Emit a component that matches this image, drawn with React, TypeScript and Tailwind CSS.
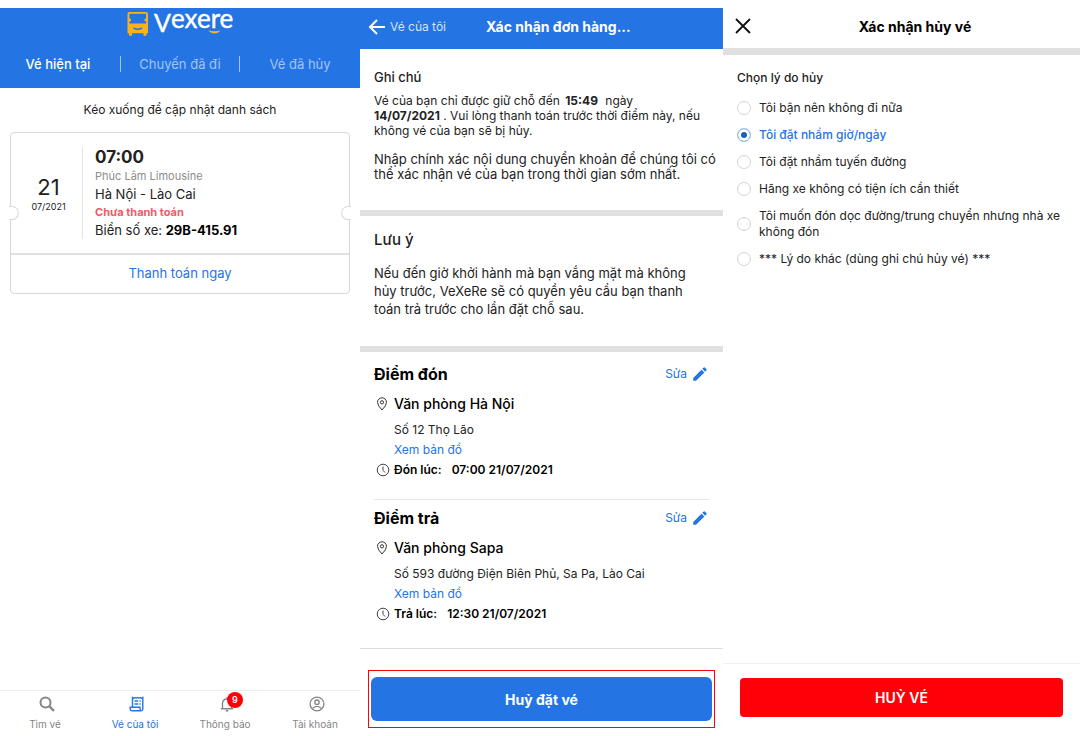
import React, { useState } from 'react';
import { MdEdit } from 'react-icons/md';

const reasons = [
  'Tôi bận nên không đi nữa',
  'Tôi đặt nhầm giờ/ngày',
  'Tôi đặt nhầm tuyến đường',
  'Hãng xe không có tiện ích cần thiết',
  'Tôi muốn đón dọc đường/trung chuyển nhưng nhà xe không đón',
  '*** Lý do khác (dùng ghi chú hủy vé) ***',
];

const Logo: React.FC = () => (
  <svg width="106" height="28" viewBox="0 0 106 28" className="overflow-visible" role="img" aria-label="Vexere">
    {/* Bus */}
    <path
      fill="#f9b21d"
      fillRule="evenodd"
      d="M2.5 2H19Q21 2 21 4V23.2H19.5V25.8H16.500V23.2H5V25.8H2V23.2H0.500V4Q0.500 2 2.500 2ZM2.400 3.800V8.200L4 9.200V10.800L2.400 11.800V13.600H19.100V11.800L17.500 10.800V9.200L19.100 8.200V3.800Z"
    />
    <path d="M6.5 17.8q4.300 2.800 8.600 0" fill="none" stroke="#2474e4" strokeWidth="1.6" />
    {/* Wordmark */}
    <text fill="#fff" fontFamily="Lato, sans-serif" fontSize="26" x="44" y="18" stroke="#fff" strokeWidth="0.4">exere</text>
    <text fill="#fff" fontFamily="Lato, sans-serif" fontSize="25" x="27" y="22" stroke="#fff" strokeWidth="0.4">V</text>
    <path d="M81 20.500q6.500 1.500 13 0q-6.500 6 -13 0z" fill="#f9b21d" />
  </svg>
);

const SearchIcon: React.FC = () => (
  <svg width="16" height="16" viewBox="0 0 16 16" fill="none" stroke="currentColor" strokeWidth="2">
    <circle cx="6.5" cy="6.5" r="5" />
    <path d="M10.2 10.2L15 15" strokeWidth="2.4" />
  </svg>
);

const TicketIcon: React.FC = () => (
  <svg width="16" height="16" viewBox="0 0 16 16" fill="none" stroke="currentColor" strokeWidth="1.4">
    <path d="M3.5 11V1.500l1.200.8 1.300-.8 1.300.8 1.300-.8 1.300.8 1.300-.8 1.300.8 1.300-.8V13q0 1.700-1.700 1.700" />
    <path d="M11 11.300H1.200V13q0 1.700 1.600 1.700h9.400Q11 14.300 11 13z" />
    <path d="M5.500 5h3.800M5.500 8h3.800M10.500 5h1.200M10.500 8h1.200" />
  </svg>
);

const BellIcon: React.FC = () => (
  <svg width="16" height="16" viewBox="0 0 16 16" fill="none" stroke="currentColor" strokeWidth="1.4">
    <path d="M1.800 12.700h12.400M3.500 12.500V7.500Q3.500 3 8 3t4.500 4.500v5M8 3V1.200" />
    <path d="M6.700 14.700h2.600" strokeWidth="1.6" />
  </svg>
);

const UserIcon: React.FC = () => (
  <svg width="16" height="16" viewBox="0 0 16 16" fill="none" stroke="currentColor" strokeWidth="1.3">
    <circle cx="8" cy="8" r="6.9" />
    <circle cx="8" cy="6.2" r="2.2" />
    <path d="M3.500 12.700Q5 10.400 8 10.400t4.500 2.300" />
  </svg>
);

const PinIcon: React.FC = () => (
  <svg width="12" height="14" viewBox="0 0 12 14" fill="none" stroke="#333" strokeWidth="1">
    <path d="M6 13Q1.500 8.500 1.500 5.300a4.500 4.500 0 0 1 9 0Q10.500 8.500 6 13z" />
    <circle cx="6" cy="5.3" r="1.6" />
  </svg>
);

const ClockIcon: React.FC = () => (
  <svg width="14" height="14" viewBox="0 0 14 14" fill="none" stroke="#444" strokeWidth="1">
    <circle cx="7" cy="7" r="5.8" />
    <path d="M7 3.500V7.300L9 9.500" />
  </svg>
);

const navItems = [
  { label: 'Tìm vé', icon: SearchIcon, active: false, badge: null },
  { label: 'Vé của tôi', icon: TicketIcon, active: true, badge: null },
  { label: 'Thông báo', icon: BellIcon, active: false, badge: '9' },
  { label: 'Tài khoản', icon: UserIcon, active: false, badge: null },
];

const TicketsScreen: React.FC = () => (
  <section className="flex min-w-0 flex-col">
    <header className="flex h-20 flex-col items-center bg-[#2474e4] pt-0.5">
      <Logo />
      <nav className="mt-3 grid w-full grid-cols-3 text-[13px] leading-7">
        <button className="pr-1 font-medium text-white">Vé hiện tại</button>
        <button className="relative text-[#a3c4f2] before:absolute before:inset-y-1.5 before:left-0 before:w-px before:bg-[#a3c4f2] after:absolute after:inset-y-1.5 after:right-0 after:w-px after:bg-[#a3c4f2]">
          Chuyến đã đi
        </button>
        <button className="text-[#a3c4f2]">Vé đã hủy</button>
      </nav>
    </header>

    <p className="mt-3 text-center text-[12px] leading-5 text-[#222]">Kéo xuống để cập nhật danh sách</p>

    <article className="relative mx-2.5 mt-3 rounded border border-[#d9d9d9]">
      <div className="flex py-3.5">
        <div className="flex w-[72px] flex-col items-center justify-center border-r border-[#e5e5e5] pt-1 pl-1 text-[#222]">
          <span className="text-[22px] leading-6">21</span>
          <span className="text-[9px] leading-4">07/2021</span>
        </div>
        <div className="pl-3 text-[13px] leading-[18px] text-[#222]">
          <h2 className="text-[17px] leading-5 font-bold">07:00</h2>
          <p className="text-[11px] text-[#8c8c8c]">Phúc Lâm Limousine</p>
          <p>Hà Nội - Lào Cai</p>
          <p className="text-[11px] font-bold text-[#ee5a68]">Chưa thanh toán</p>
          <p>
            Biển số xe: <b className="text-black">29B-415.91</b>
          </p>
        </div>
      </div>
      <button className="h-10 w-full border-t-2 border-[#e0e0e0] text-[13px] text-[#2474e4]">Thanh toán ngay</button>
      <span className="absolute top-[73px] -left-0.5 h-3.5 w-2.5 rounded-r-full border border-l-0 border-[#d9d9d9] bg-white" />
      <span className="absolute top-[73px] -right-0.5 h-3.5 w-2.5 rounded-l-full border border-r-0 border-[#d9d9d9] bg-white" />
    </article>

    <nav className="mt-auto grid h-[46px] grid-cols-4 border-t border-[#ececec]">
      {navItems.map(({ label, icon: Icon, active, badge }) => (
        <button
          key={label}
          className={`flex flex-col items-center pt-[5px] text-[10px] leading-4 ${active ? 'text-[#2474e4]' : 'text-[#858585]'}`}
        >
          <span className="relative pl-1">
            <Icon />
            {badge && (
              <span className="absolute -top-1 left-3 flex size-4 items-center justify-center rounded-full bg-[#ff0008] text-[9px] font-semibold text-white">
                {badge}
              </span>
            )}
          </span>
          <span className="mt-1">{label}</span>
        </button>
      ))}
    </nav>
  </section>
);

type StopProps = { title: string; place: string; address: string; label: string; time: string };

const Stop: React.FC<StopProps> = ({ title, place, address, label, time }) => (
  <div>
    <div className="flex items-center justify-between">
      <h2 className="text-[16px] leading-6 font-bold text-black">{title}</h2>
      <button className="flex items-center gap-1 text-[12px] text-[#2474e4]">
        Sửa <MdEdit className="size-[18px]" />
      </button>
    </div>
    <div className="mt-1.5 grid grid-cols-[20px_1fr] items-center">
      <span className="pl-0.5"><PinIcon /></span>
      <h3 className="text-[14px] leading-6 font-medium text-black">{place}</h3>
    </div>
    <div className="mt-1 flex flex-col items-start pl-5 text-[12px] leading-5">
      <p>{address}</p>
      <a href="#" className="text-[#2474e4]">Xem bản đồ</a>
    </div>
    <div className="grid grid-cols-[20px_1fr] items-center text-[12px] leading-5 font-semibold text-black">
      <span className="pl-0.5"><ClockIcon /></span>
      <p>
        <span className="mr-2.5">{label}</span>
        {time}
      </p>
    </div>
  </div>
);

const OrderScreen: React.FC = () => (
  <section className="flex min-w-0 flex-col text-[#222]">
    <header className="grid h-[41px] grid-cols-[118px_1fr] items-center bg-[#2474e4] pb-1 pl-2 text-white">
      <button className="flex items-center gap-1 text-[12px] text-[#d3e3fa]">
        <svg width="18" height="16" viewBox="0 0 18 16" fill="none" stroke="#fff" strokeWidth="2">
          <path d="M17 8H2M9 1L2 8l7 7" />
        </svg>
        Vé của tôi
      </button>
      <h1 className="text-[14px] font-bold">Xác nhận đơn hàng...</h1>
    </header>

    <div className="pt-4 pb-7 pl-3.5 text-[12px] leading-[15px]">
      <h2 className="mb-1 text-[13px] leading-6 font-medium">Ghi chú</h2>
      <p>
        Vé của bạn chỉ được giữ chỗ đến <b className="mr-1 ml-0.5">15:49</b> ngày
        <br />
        <b>14/07/2021</b> . Vui lòng thanh toán trước thời điểm này, nếu
        <br />
        không vé của bạn sẽ bị hủy.
      </p>
      <p className="mt-3.5 text-[13px]">
        Nhập chính xác nội dung chuyển khoản để chúng tôi có
        <br />
        thể xác nhận vé của bạn trong thời gian sớm nhất.
      </p>
    </div>

    <div className="border-y-[6px] border-[#e0e0e0] pt-3 pb-7 pl-3.5 text-[13px] leading-[18px]">
      <h2 className="mb-3 text-[15px] leading-6 font-medium">Lưu ý</h2>
      <p>
        Nếu đến giờ khởi hành mà bạn vắng mặt mà không
        <br />
        hủy trước, VeXeRe sẽ có quyền yêu cầu bạn thanh
        <br />
        toán trả trước cho lần đặt chỗ sau.
      </p>
    </div>

    <div className="px-3.5 pt-2.5">
      <Stop
        title="Điểm đón"
        place="Văn phòng Hà Nội"
        address="Số 12 Thọ Lão"
        label="Đón lúc:"
        time="07:00 21/07/2021"
      />
      <hr className="mt-[19px] mb-1.5 border-[#e8e8e8]" />
      <Stop
        title="Điểm trả"
        place="Văn phòng Sapa"
        address="Số 593 đường Điện Biên Phủ, Sa Pa, Lào Cai"
        label="Trả lúc:"
        time="12:30 21/07/2021"
      />
    </div>

    <footer className="mt-auto border-t border-[#dcdcdc] px-2 pt-[21px] pb-2">
      <div className="border border-[#ff0010] px-0.5 py-1.5">
        <button className="h-11 w-full rounded-md bg-[#2474e4] text-[14px] font-bold text-white">Huỷ đặt vé</button>
      </div>
    </footer>
  </section>
);

const CancelScreen: React.FC = () => {
  const [selected, setSelected] = useState(1);

  return (
    <section className="flex min-w-0 flex-col text-[#222]">
      <header className="grid h-[47px] grid-cols-[40px_1fr_13px] items-center border-b-[7px] border-[#e0e0e0] pb-1">
        <button aria-label="Đóng" className="pl-3">
          <svg width="16" height="16" viewBox="0 0 16 16" stroke="#111" strokeWidth="1.8">
            <path d="M1 1l14 14M15 1L1 15" />
          </svg>
        </button>
        <h1 className="text-center text-[14px] font-bold text-black">Xác nhận hủy vé</h1>
      </header>

      <fieldset className="px-3.5 pt-[13px] text-[12px] leading-4">
        <legend className="float-left mb-3 w-full text-[12px] leading-5 font-medium">Chọn lý do hủy</legend>
        <div className="clear-both flex flex-col gap-[11px]">
          {reasons.map((reason, i) => (
            <label
              key={reason}
              className={`flex items-center gap-2 ${selected === i ? 'font-medium text-[#2474e4]' : ''}`}
            >
              <input
                type="radio"
                name="reason"
                checked={selected === i}
                onChange={() => setSelected(i)}
                className="size-3.5 shrink-0 appearance-none rounded-full border border-[#d4d4d4] bg-white checked:border-[#a9c6ea] checked:bg-[#1565b3] checked:shadow-[inset_0_0_0_3px_white]"
              />
              {reason}
            </label>
          ))}
        </div>
      </fieldset>

      <footer className="mt-auto border-t border-[#f0f0f0] px-[17px] pt-3.5 pb-[19px]">
        <button className="h-[39px] w-full rounded bg-[#ff0008] text-[14px] font-semibold text-white">HUỶ VÉ</button>
      </footer>
    </section>
  );
};

export default function App() {
  return (
    <main className="grid min-h-screen grid-cols-[360fr_363fr_357fr] bg-white pt-2 font-['Inter',sans-serif]">
      <TicketsScreen />
      <OrderScreen />
      <CancelScreen />
    </main>
  );
}
